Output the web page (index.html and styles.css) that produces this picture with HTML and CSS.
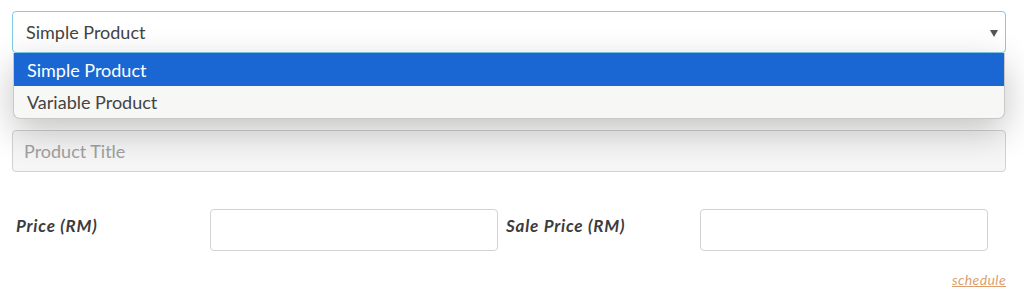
FILE: index.html
```html
<!DOCTYPE html>
<html>
<head>
<meta charset="utf-8">
<link rel="stylesheet" href="styles.css">
</head>
<body>
<div class="form">
  <div class="select-wrap">
    <div class="select">
      <span class="select-value">Simple Product</span>
      <span class="caret"></span>
    </div>
    <ul class="menu">
      <li class="opt active">Simple Product</li>
      <li class="opt">Variable Product</li>
    </ul>
  </div>
  <div class="field title-field">
    <input class="input title" type="text" placeholder="Product Title">
  </div>
  <div class="price-row">
    <label class="lbl lbl-first">Price (RM)</label>
    <input class="input price" type="text">
    <label class="lbl lbl-second">Sale Price (RM)</label>
    <input class="input price" type="text">
  </div>
  <div class="schedule-row">
    <a class="schedule" href="#">schedule</a>
  </div>
</div>
</body>
</html>
```

FILE: styles.css
```css
* { box-sizing: border-box; }
html, body { margin: 0; padding: 0; background: #fff; }
body {
  font-family: "Lato", "Open Sans", sans-serif;
  color: #444;
  width: 1024px;
  height: 299px;
  overflow: hidden;
}
.form {
  padding: 11px 18px 0 12px;
}
.select-wrap {
  position: relative;
  z-index: 2;
}
.select {
  height: 42px;
  border: 1px solid #80cce6;
  border-radius: 4px;
  background: #fff;
  display: flex;
  align-items: center;
  justify-content: space-between;
  padding: 0 7px 0 13px;
  font-size: 18px;
  color: #444;
}
.caret {
  width: 0;
  height: 0;
  border-left: 4px solid transparent;
  border-right: 4px solid transparent;
  border-top: 7px solid #555;
  margin-top: 2px;
}
.menu {
  position: absolute;
  top: 100%;
  left: 1px;
  right: 1px;
  margin: 0;
  padding: 0;
  list-style: none;
  background: #f7f7f5;
  border: 1px solid #c8c8c8;
  border-top: 0;
  border-radius: 0 0 7px 7px;
  box-shadow: 0 12px 36px rgba(0, 0, 0, 0.24);
  overflow: hidden;
}
.opt {
  height: 32px;
  display: flex;
  align-items: center;
  padding-left: 13px;
  font-size: 18px;
  color: #444;
}
.opt.active {
  height: 33px;
  background: #1a67d3;
  color: #fff;
}
.title-field {
  margin-top: 77px;
}
.input {
  display: block;
  height: 42px;
  border: 1px solid #d2d2d2;
  border-radius: 4px;
  background: #fff;
  font-family: inherit;
  font-size: 18px;
  padding: 0 11px;
  outline: none;
}
.title {
  width: 100%;
  background: #f6f6f6;
}
.title::placeholder { color: #a0a0a0; }
.price-row {
  margin-top: 37px;
  display: flex;
  align-items: flex-start;
}
.lbl {
  font-weight: 700;
  font-style: italic;
  font-size: 17px;
  letter-spacing: 0.8px;
  color: #3c3c3c;
  padding-top: 6px;
}
.lbl-first {
  width: 198px;
  padding-left: 4px;
}
.lbl-second {
  width: 202px;
  padding-left: 8px;
}
.price {
  width: 288px;
}
.schedule-row {
  display: flex;
  justify-content: flex-end;
  margin-top: 20px;
}
.schedule {
  font-size: 14px;
  letter-spacing: 0.4px;
  font-style: italic;
  color: #dc9e6c;
  text-decoration: underline;
}
```
